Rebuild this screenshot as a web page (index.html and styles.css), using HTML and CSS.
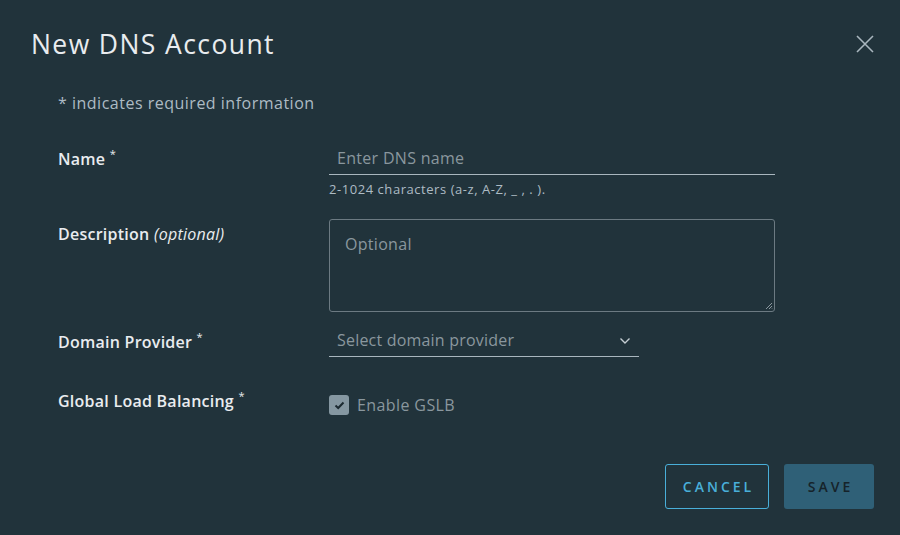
FILE: index.html
```html
<!DOCTYPE html>
<html>
<head>
<meta charset="utf-8">
<link rel="stylesheet" href="styles.css">
</head>
<body>
<div class="modal">
  <div class="header">
    <h1 class="title">New DNS Account</h1>
    <button class="close" aria-label="Close">
      <svg width="18" height="18" viewBox="0 0 18 18"><path d="M1 1 L17 17 M17 1 L1 17" stroke="#a9b6be" stroke-width="1.6" fill="none"/></svg>
    </button>
  </div>
  <div class="body">
    <p class="required-note">* indicates required information</p>
    <div class="row row-name">
      <label class="label">Name <sup>*</sup></label>
      <div class="control">
        <div class="input-line wide"><span class="ph">Enter DNS name</span></div>
        <div class="helper">2-1024 characters (a-z, A-Z, _ , . ).</div>
      </div>
    </div>
    <div class="row row-desc">
      <label class="label">Description <em>(optional)</em></label>
      <div class="control">
        <div class="textarea"><span class="ph">Optional</span>
          <svg class="grip" width="8" height="8" viewBox="0 0 8 8"><path d="M7 1 L1 7 M7 4 L4 7 M7 6.5 L6.5 7" stroke="#8a979e" stroke-width="1"/></svg>
        </div>
      </div>
    </div>
    <div class="row row-domain">
      <label class="label">Domain Provider <sup>*</sup></label>
      <div class="control">
        <div class="input-line select"><span class="ph ph-select">Select domain provider</span>
          <svg width="12" height="8" viewBox="0 0 12 8"><path d="M1.5 1.5 L6 6 L10.5 1.5" stroke="#c5ced3" stroke-width="1.4" fill="none"/></svg>
        </div>
      </div>
    </div>
    <div class="row row-gslb">
      <label class="label">Global Load Balancing <sup>*</sup></label>
      <div class="control">
        <div class="checkbox-wrap">
          <span class="checkbox"><svg width="11" height="9" viewBox="0 0 11 9"><path d="M1.5 4.5 L4.2 7 L9.5 1.5" stroke="#1c2a31" stroke-width="2" fill="none"/></svg></span>
          <span class="check-label">Enable GSLB</span>
        </div>
      </div>
    </div>
  </div>
  <div class="footer">
    <button class="btn btn-outline">CANCEL</button>
    <button class="btn btn-primary">SAVE</button>
  </div>
</div>
</body>
</html>
```

FILE: styles.css
```css
html, body {
  margin: 0;
  padding: 0;
  background: #21333b;
}
body {
  font-family: "Open Sans", "Noto Sans", sans-serif;
  color: #e9ecef;
  width: 900px;
  height: 535px;
  overflow: hidden;
}
.modal {
  display: flex;
  flex-direction: column;
  height: 535px;
}
.header {
  display: flex;
  justify-content: space-between;
  align-items: center;
  padding: 27px 26px 0 31px;
}
.title {
  margin: 0;
  font-weight: 400;
  font-size: 26.5px;
  line-height: 34px;
  letter-spacing: 1.4px;
  color: #e9ecef;
}
.close {
  background: none;
  border: 0;
  padding: 0;
  width: 18px;
  height: 18px;
  display: flex;
}
.body {
  padding: 0 0 0 58px;
}
.required-note {
  margin: 32px 0 0;
  font-size: 16px;
  line-height: 20px;
  letter-spacing: 0.5px;
  color: #adbbc4;
}
.row {
  display: flex;
}
.label {
  width: 271px;
  font-weight: 600;
  font-size: 16px;
  line-height: 20px;
  letter-spacing: 0.25px;
  color: #e9ecef;
}
.label sup {
  font-size: 11px;
  font-weight: 400;
  vertical-align: top;
  position: relative;
  top: -5px;
}
.label em {
  font-weight: 400;
  font-style: italic;
}
.ph {
  color: #8a979e;
  font-size: 16px;
  letter-spacing: 0.3px;
}
.ph-select { letter-spacing: 0.2px; }
.row-name { margin-top: 36px; }
.input-line {
  border-bottom: 1px solid #a9b6be;
  box-sizing: border-box;
  height: 27px;
  padding: 0 8px;
  display: flex;
  align-items: flex-start;
  justify-content: space-between;
  line-height: 20px;
  margin-top: -1px;
}
.input-line.wide { width: 446px; }
.input-line.select { width: 310px; }
.input-line.select svg { margin-top: 7px; }
.helper {
  margin-top: 7px;
  font-size: 13px;
  line-height: 14px;
  letter-spacing: 0.55px;
  color: #adbbc4;
}
.row-desc { margin-top: 23px; }
.row-desc .label { padding-top: 5px; }
.textarea {
  position: relative;
  width: 446px;
  height: 93px;
  box-sizing: border-box;
  border: 1px solid #6c7a82;
  border-radius: 3px;
  padding: 14px 15px;
  line-height: 20px;
}
.grip {
  position: absolute;
  right: 1px;
  bottom: 1px;
}
.row-domain { margin-top: 19px; }
.row-domain .label { padding-top: 1px; }
.row-gslb { margin-top: 34px; }
.checkbox-wrap {
  display: flex;
  align-items: center;
  margin-top: 4px;
  height: 20px;
}
.checkbox {
  width: 20px;
  height: 20px;
  border-radius: 3px;
  background: #8597a1;
  display: flex;
  align-items: center;
  justify-content: center;
}
.check-label {
  margin-left: 8px;
  font-size: 16px;
  letter-spacing: 0.4px;
  color: #8a979e;
}
.footer {
  margin-top: auto;
  display: flex;
  justify-content: flex-end;
  gap: 15px;
  padding: 0 26px 26px 0;
}
.btn {
  height: 45px;
  box-sizing: border-box;
  border-radius: 3px;
  font-family: "Open Sans", "Noto Sans", sans-serif;
  font-size: 14px;
  font-weight: 600;
  letter-spacing: 3px;
  padding: 0 0 0 3px;
}
.btn-outline {
  width: 104px;
  background: transparent;
  border: 1px solid #49afd9;
  color: #49afd9;
}
.btn-primary {
  width: 90px;
  background: #2f6077;
  border: 0;
  color: #16232a;
}
```
